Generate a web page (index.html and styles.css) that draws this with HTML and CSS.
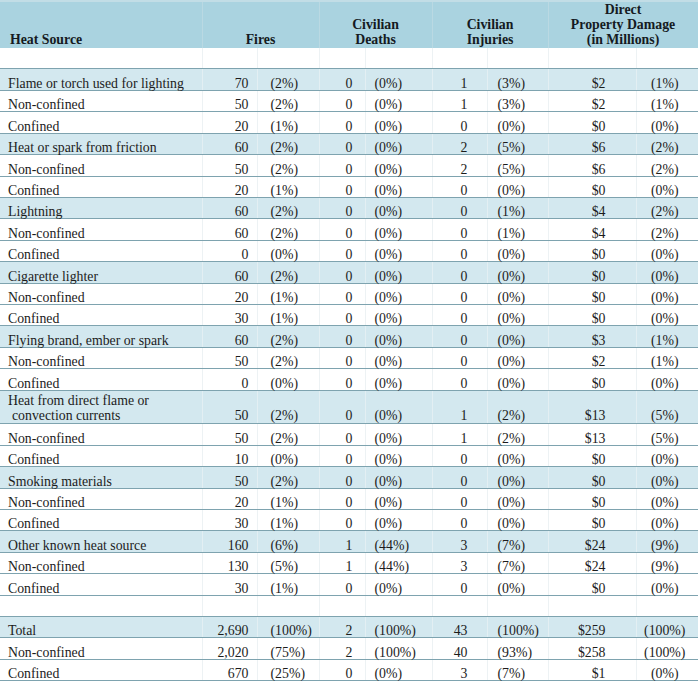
FILE: index.html
```html
<!DOCTYPE html>
<html>
<head>
<meta charset="utf-8">
<link rel="stylesheet" href="styles.css">
</head>
<body>
<table class="fire-table">
  <colgroup>
    <col class="c-src"><col class="c-fn"><col class="c-fp"><col class="c-dn"><col class="c-dp"><col class="c-in"><col class="c-ip"><col class="c-mn"><col class="c-mp">
  </colgroup>
  <thead>
    <tr class="head">
      <th class="h-src">Heat Source</th>
      <th colspan="2">Fires</th>
      <th colspan="2">Civilian<br>Deaths</th>
      <th colspan="2">Civilian<br>Injuries</th>
      <th colspan="2">Direct<br>Property Damage<br>(in Millions)</th>
    </tr>
  </thead>
  <tbody>
    <tr class="blank"><td></td><td></td><td></td><td></td><td></td><td></td><td></td><td></td><td></td></tr>
    <tr class="main"><td class="src">Flame or torch used for lighting</td><td class="fn">70</td><td class="fp">(2%)</td><td class="dn">0</td><td class="dp">(0%)</td><td class="in">1</td><td class="ip">(3%)</td><td class="mn">$2</td><td class="mp">(1%)</td></tr>
    <tr><td class="src">Non-confined</td><td class="fn">50</td><td class="fp">(2%)</td><td class="dn">0</td><td class="dp">(0%)</td><td class="in">1</td><td class="ip">(3%)</td><td class="mn">$2</td><td class="mp">(1%)</td></tr>
    <tr><td class="src">Confined</td><td class="fn">20</td><td class="fp">(1%)</td><td class="dn">0</td><td class="dp">(0%)</td><td class="in">0</td><td class="ip">(0%)</td><td class="mn">$0</td><td class="mp">(0%)</td></tr>
    <tr class="main"><td class="src">Heat or spark from friction</td><td class="fn">60</td><td class="fp">(2%)</td><td class="dn">0</td><td class="dp">(0%)</td><td class="in">2</td><td class="ip">(5%)</td><td class="mn">$6</td><td class="mp">(2%)</td></tr>
    <tr><td class="src">Non-confined</td><td class="fn">50</td><td class="fp">(2%)</td><td class="dn">0</td><td class="dp">(0%)</td><td class="in">2</td><td class="ip">(5%)</td><td class="mn">$6</td><td class="mp">(2%)</td></tr>
    <tr><td class="src">Confined</td><td class="fn">20</td><td class="fp">(1%)</td><td class="dn">0</td><td class="dp">(0%)</td><td class="in">0</td><td class="ip">(0%)</td><td class="mn">$0</td><td class="mp">(0%)</td></tr>
    <tr class="main"><td class="src">Lightning</td><td class="fn">60</td><td class="fp">(2%)</td><td class="dn">0</td><td class="dp">(0%)</td><td class="in">0</td><td class="ip">(1%)</td><td class="mn">$4</td><td class="mp">(2%)</td></tr>
    <tr><td class="src">Non-confined</td><td class="fn">60</td><td class="fp">(2%)</td><td class="dn">0</td><td class="dp">(0%)</td><td class="in">0</td><td class="ip">(1%)</td><td class="mn">$4</td><td class="mp">(2%)</td></tr>
    <tr><td class="src">Confined</td><td class="fn">0</td><td class="fp">(0%)</td><td class="dn">0</td><td class="dp">(0%)</td><td class="in">0</td><td class="ip">(0%)</td><td class="mn">$0</td><td class="mp">(0%)</td></tr>
    <tr class="main"><td class="src">Cigarette lighter</td><td class="fn">60</td><td class="fp">(2%)</td><td class="dn">0</td><td class="dp">(0%)</td><td class="in">0</td><td class="ip">(0%)</td><td class="mn">$0</td><td class="mp">(0%)</td></tr>
    <tr><td class="src">Non-confined</td><td class="fn">20</td><td class="fp">(1%)</td><td class="dn">0</td><td class="dp">(0%)</td><td class="in">0</td><td class="ip">(0%)</td><td class="mn">$0</td><td class="mp">(0%)</td></tr>
    <tr><td class="src">Confined</td><td class="fn">30</td><td class="fp">(1%)</td><td class="dn">0</td><td class="dp">(0%)</td><td class="in">0</td><td class="ip">(0%)</td><td class="mn">$0</td><td class="mp">(0%)</td></tr>
    <tr class="main"><td class="src">Flying brand, ember or spark</td><td class="fn">60</td><td class="fp">(2%)</td><td class="dn">0</td><td class="dp">(0%)</td><td class="in">0</td><td class="ip">(0%)</td><td class="mn">$3</td><td class="mp">(1%)</td></tr>
    <tr><td class="src">Non-confined</td><td class="fn">50</td><td class="fp">(2%)</td><td class="dn">0</td><td class="dp">(0%)</td><td class="in">0</td><td class="ip">(0%)</td><td class="mn">$2</td><td class="mp">(1%)</td></tr>
    <tr><td class="src">Confined</td><td class="fn">0</td><td class="fp">(0%)</td><td class="dn">0</td><td class="dp">(0%)</td><td class="in">0</td><td class="ip">(0%)</td><td class="mn">$0</td><td class="mp">(0%)</td></tr>
    <tr class="main double"><td class="src">Heat from direct flame or<br><span class="indent">convection currents</span></td><td class="fn">50</td><td class="fp">(2%)</td><td class="dn">0</td><td class="dp">(0%)</td><td class="in">1</td><td class="ip">(2%)</td><td class="mn">$13</td><td class="mp">(5%)</td></tr>
    <tr><td class="src">Non-confined</td><td class="fn">50</td><td class="fp">(2%)</td><td class="dn">0</td><td class="dp">(0%)</td><td class="in">1</td><td class="ip">(2%)</td><td class="mn">$13</td><td class="mp">(5%)</td></tr>
    <tr><td class="src">Confined</td><td class="fn">10</td><td class="fp">(0%)</td><td class="dn">0</td><td class="dp">(0%)</td><td class="in">0</td><td class="ip">(0%)</td><td class="mn">$0</td><td class="mp">(0%)</td></tr>
    <tr class="main"><td class="src">Smoking materials</td><td class="fn">50</td><td class="fp">(2%)</td><td class="dn">0</td><td class="dp">(0%)</td><td class="in">0</td><td class="ip">(0%)</td><td class="mn">$0</td><td class="mp">(0%)</td></tr>
    <tr><td class="src">Non-confined</td><td class="fn">20</td><td class="fp">(1%)</td><td class="dn">0</td><td class="dp">(0%)</td><td class="in">0</td><td class="ip">(0%)</td><td class="mn">$0</td><td class="mp">(0%)</td></tr>
    <tr><td class="src">Confined</td><td class="fn">30</td><td class="fp">(1%)</td><td class="dn">0</td><td class="dp">(0%)</td><td class="in">0</td><td class="ip">(0%)</td><td class="mn">$0</td><td class="mp">(0%)</td></tr>
    <tr class="main"><td class="src">Other known heat source</td><td class="fn">160</td><td class="fp">(6%)</td><td class="dn">1</td><td class="dp">(44%)</td><td class="in">3</td><td class="ip">(7%)</td><td class="mn">$24</td><td class="mp">(9%)</td></tr>
    <tr><td class="src">Non-confined</td><td class="fn">130</td><td class="fp">(5%)</td><td class="dn">1</td><td class="dp">(44%)</td><td class="in">3</td><td class="ip">(7%)</td><td class="mn">$24</td><td class="mp">(9%)</td></tr>
    <tr><td class="src">Confined</td><td class="fn">30</td><td class="fp">(1%)</td><td class="dn">0</td><td class="dp">(0%)</td><td class="in">0</td><td class="ip">(0%)</td><td class="mn">$0</td><td class="mp">(0%)</td></tr>
    <tr class="blank"><td></td><td></td><td></td><td></td><td></td><td></td><td></td><td></td><td></td></tr>
    <tr class="main"><td class="src">Total</td><td class="fn">2,690</td><td class="fp">(100%)</td><td class="dn">2</td><td class="dp">(100%)</td><td class="in">43</td><td class="ip">(100%)</td><td class="mn">$259</td><td class="mp">(100%)</td></tr>
    <tr><td class="src">Non-confined</td><td class="fn">2,020</td><td class="fp">(75%)</td><td class="dn">2</td><td class="dp">(100%)</td><td class="in">40</td><td class="ip">(93%)</td><td class="mn">$258</td><td class="mp">(100%)</td></tr>
    <tr><td class="src">Confined</td><td class="fn">670</td><td class="fp">(25%)</td><td class="dn">0</td><td class="dp">(0%)</td><td class="in">3</td><td class="ip">(7%)</td><td class="mn">$1</td><td class="mp">(0%)</td></tr>
  </tbody>
</table>
</body>
</html>
```

FILE: styles.css
```css
html, body {
  margin: 0;
  padding: 0;
  background: #ffffff;
}

.fire-table {
  width: 698px;
  table-layout: fixed;
  border-collapse: collapse;
  font-family: "Liberation Serif", "Times New Roman", serif;
  font-size: 13.8px;
  color: #1c1c1c;
}

.c-src { width: 202px; }
.c-fn { width: 55px; }
.c-fp { width: 62px; }
.c-dn { width: 46px; }
.c-dp { width: 67px; }
.c-in { width: 55px; }
.c-ip { width: 61px; }
.c-mn { width: 88px; }
.c-mp { width: 62px; }

.head th {
  background: #aad3e0;
  border-top: 2px solid #c2dde6;
  border-left: 1px solid #bad9e3;
  border-right: 1px solid #bad9e3;
  font-weight: bold;
  color: #151a22;
  line-height: 15px;
  padding: 0 0 1px;
  vertical-align: bottom;
  text-align: center;
  white-space: nowrap;
}

.head th.h-src {
  text-align: left;
  padding-left: 10px;
  border-left: none;
}

.fire-table td {
  padding: 7.43px 0 0;
  line-height: 13px;
  height: 13px;
  border-bottom: 1px solid #7ea3af;
  border-left: 1px solid #edf2f4;
  vertical-align: bottom;
  white-space: nowrap;
}

.fire-table td:first-child {
  border-left: none;
}

.main td {
  background: #d3e8ef;
  border-left-color: #e3eff3;
}

.double td {
  padding-top: 2px;
  line-height: 15.25px;
  height: 29.5px;
}

.blank td {
  height: 13px;
}

.src { padding-left: 8px !important; }
.indent { padding-left: 4px; }

.fn { text-align: right; padding-right: 8px !important; }
.fp { text-align: left; padding-left: 13px !important; }
.dn { text-align: right; padding-right: 12px !important; }
.dp { text-align: left; padding-left: 9px !important; }
.in { text-align: right; padding-right: 19px !important; }
.ip { text-align: left; padding-left: 10px !important; }
.mn { text-align: right; padding-right: 30px !important; }
.mp { text-align: center; padding-right: 5px !important; }
```
